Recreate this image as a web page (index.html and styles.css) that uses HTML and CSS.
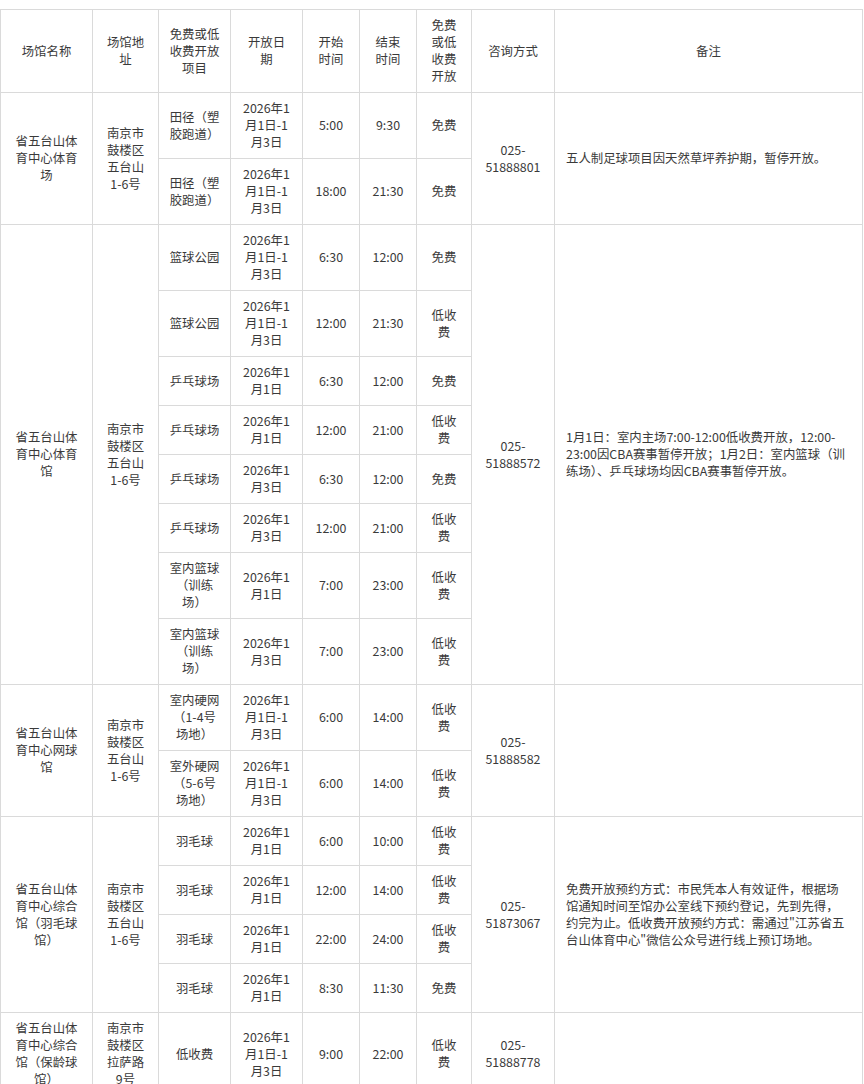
FILE: index.html
```html
<!DOCTYPE html>
<html lang="zh-CN">
<head>
<meta charset="utf-8">
<title>场馆开放表</title>
<link rel="stylesheet" href="styles.css">
</head>
<body>
<table class="sched">
  <colgroup>
    <col class="c-name"><col class="c-addr"><col class="c-item"><col class="c-date"><col class="c-start"><col class="c-end"><col class="c-fee"><col class="c-tel"><col class="c-note">
  </colgroup>
  <tbody>
    <tr class="head">
      <td>场馆名称</td>
      <td>场馆地<br>址</td>
      <td>免费或低<br>收费开放<br>项目</td>
      <td>开放日<br>期</td>
      <td>开始<br>时间</td>
      <td>结束<br>时间</td>
      <td>免费<br>或低<br>收费<br>开放</td>
      <td>咨询方式</td>
      <td>备注</td>
    </tr>

    <tr>
      <td rowspan="2">省五台山体<br>育中心体育<br>场</td>
      <td rowspan="2">南京市<br>鼓楼区<br>五台山<br>1-6号</td>
      <td>田径（塑<br>胶跑道）</td>
      <td>2026年1<br>月1日-1<br>月3日</td>
      <td>5:00</td><td>9:30</td><td>免费</td>
      <td rowspan="2">025-<br>51888801</td>
      <td rowspan="2" class="note">五人制足球项目因天然草坪养护期，暂停开放。</td>
    </tr>
    <tr>
      <td>田径（塑<br>胶跑道）</td>
      <td>2026年1<br>月1日-1<br>月3日</td>
      <td>18:00</td><td>21:30</td><td>免费</td>
    </tr>

    <tr>
      <td rowspan="8">省五台山体<br>育中心体育<br>馆</td>
      <td rowspan="8">南京市<br>鼓楼区<br>五台山<br>1-6号</td>
      <td>篮球公园</td>
      <td>2026年1<br>月1日-1<br>月3日</td>
      <td>6:30</td><td>12:00</td><td>免费</td>
      <td rowspan="8">025-<br>51888572</td>
      <td rowspan="8" class="note">1月1日：室内主场7:00-12:00低收费开放，12:00-<br>23:00因CBA赛事暂停开放；1月2日：室内篮球（训<br>练场）、乒乓球场均因CBA赛事暂停开放。</td>
    </tr>
    <tr>
      <td>篮球公园</td>
      <td>2026年1<br>月1日-1<br>月3日</td>
      <td>12:00</td><td>21:30</td><td>低收<br>费</td>
    </tr>
    <tr>
      <td>乒乓球场</td>
      <td>2026年1<br>月1日</td>
      <td>6:30</td><td>12:00</td><td>免费</td>
    </tr>
    <tr>
      <td>乒乓球场</td>
      <td>2026年1<br>月1日</td>
      <td>12:00</td><td>21:00</td><td>低收<br>费</td>
    </tr>
    <tr>
      <td>乒乓球场</td>
      <td>2026年1<br>月3日</td>
      <td>6:30</td><td>12:00</td><td>免费</td>
    </tr>
    <tr>
      <td>乒乓球场</td>
      <td>2026年1<br>月3日</td>
      <td>12:00</td><td>21:00</td><td>低收<br>费</td>
    </tr>
    <tr>
      <td>室内篮球<br>（训练<br>场）</td>
      <td>2026年1<br>月1日</td>
      <td>7:00</td><td>23:00</td><td>低收<br>费</td>
    </tr>
    <tr>
      <td>室内篮球<br>（训练<br>场）</td>
      <td>2026年1<br>月3日</td>
      <td>7:00</td><td>23:00</td><td>低收<br>费</td>
    </tr>

    <tr>
      <td rowspan="2">省五台山体<br>育中心网球<br>馆</td>
      <td rowspan="2">南京市<br>鼓楼区<br>五台山<br>1-6号</td>
      <td>室内硬网<br>（1-4号<br>场地）</td>
      <td>2026年1<br>月1日-1<br>月3日</td>
      <td>6:00</td><td>14:00</td><td>低收<br>费</td>
      <td rowspan="2">025-<br>51888582</td>
      <td rowspan="2" class="note"></td>
    </tr>
    <tr>
      <td>室外硬网<br>（5-6号<br>场地）</td>
      <td>2026年1<br>月1日-1<br>月3日</td>
      <td>6:00</td><td>14:00</td><td>低收<br>费</td>
    </tr>

    <tr>
      <td rowspan="4">省五台山体<br>育中心综合<br>馆（羽毛球<br>馆）</td>
      <td rowspan="4">南京市<br>鼓楼区<br>五台山<br>1-6号</td>
      <td>羽毛球</td>
      <td>2026年1<br>月1日</td>
      <td>6:00</td><td>10:00</td><td>低收<br>费</td>
      <td rowspan="4">025-<br>51873067</td>
      <td rowspan="4" class="note">免费开放预约方式：市民凭本人有效证件，根据场<br>馆通知时间至馆办公室线下预约登记，先到先得，<br>约完为止。低收费开放预约方式：需通过"江苏省五<br>台山体育中心"微信公众号进行线上预订场地。</td>
    </tr>
    <tr>
      <td>羽毛球</td>
      <td>2026年1<br>月1日</td>
      <td>12:00</td><td>14:00</td><td>低收<br>费</td>
    </tr>
    <tr>
      <td>羽毛球</td>
      <td>2026年1<br>月1日</td>
      <td>22:00</td><td>24:00</td><td>低收<br>费</td>
    </tr>
    <tr>
      <td>羽毛球</td>
      <td>2026年1<br>月1日</td>
      <td>8:30</td><td>11:30</td><td>免费</td>
    </tr>

    <tr>
      <td>省五台山体<br>育中心综合<br>馆（保龄球<br>馆）</td>
      <td>南京市<br>鼓楼区<br>拉萨路<br>9号</td>
      <td>低收费</td>
      <td>2026年1<br>月1日-1<br>月3日</td>
      <td>9:00</td><td>22:00</td><td>低收<br>费</td>
      <td>025-<br>51888778</td>
      <td class="note"></td>
    </tr>
  </tbody>
</table>
</body>
</html>
```

FILE: styles.css
```css
html, body {
  margin: 0;
  padding: 0;
  background: #ffffff;
}

body {
  padding-top: 9px;
  font-family: "Noto Sans CJK SC", "Noto Sans", sans-serif;
  font-size: 12.4px;
  line-height: 17px;
  color: #3a3a3a;
}

.sched {
  border-collapse: collapse;
  table-layout: fixed;
  width: 862px;
}

.c-name { width: 92px; }
.c-addr { width: 66px; }
.c-item { width: 72px; }
.c-date { width: 72px; }
.c-start { width: 57px; }
.c-end { width: 57px; }
.c-fee { width: 55px; }
.c-tel { width: 83px; }
.c-note { width: 308px; }

.sched td {
  border: 1px solid #dadada;
  padding: 7px 3px;
  text-align: center;
  vertical-align: middle;
  white-space: nowrap;
}

.sched td.note {
  text-align: left;
  padding: 7px 11px;
}
```
